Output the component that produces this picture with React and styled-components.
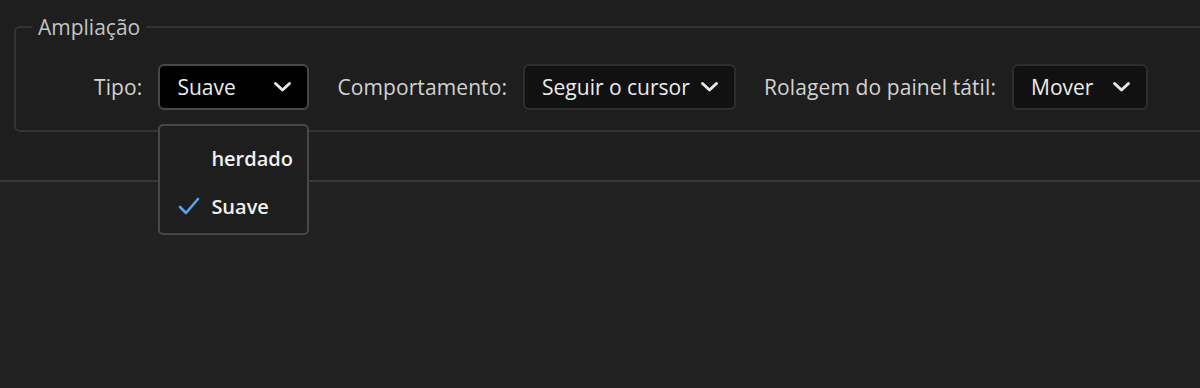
import React from "react";
import styled, { createGlobalStyle } from "styled-components";

const GlobalStyle = createGlobalStyle`
  html, body {
    margin: 0;
    padding: 0;
    background: #222222;
    font-family: "Open Sans", "Noto Sans", sans-serif;
  }
`;

const Chevron = () => (
  <svg width="19" height="12" viewBox="0 0 19 12" fill="none">
    <path
      d="M2.5 2.5 L9.5 9 L16.5 2.5"
      stroke="#e6e6e6"
      strokeWidth="3"
      strokeLinecap="round"
      strokeLinejoin="round"
    />
  </svg>
);

const Check = () => (
  <svg width="22" height="18" viewBox="0 0 22 18" fill="none">
    <path
      d="M2 10 L8 16 L20 2"
      stroke="#5aa2ee"
      strokeWidth="2.6"
      strokeLinecap="round"
      strokeLinejoin="round"
    />
  </svg>
);

const App = () => {
  return (
    <Page>
      <GlobalStyle />
      <TopSection>
        <Group>
          <Legend>Ampliação</Legend>
          <Row>
            <Field>
              <Label>Tipo:</Label>
              <SelectWrap>
                <Select $width={151} $active>
                  <span>Suave</span>
                  <Chevron />
                </Select>
                <Menu>
                  <MenuItem>
                    <CheckSlot />
                    herdado
                  </MenuItem>
                  <MenuItem>
                    <CheckSlot>
                      <Check />
                    </CheckSlot>
                    Suave
                  </MenuItem>
                </Menu>
              </SelectWrap>
            </Field>
            <Field>
              <Label>Comportamento:</Label>
              <Select $width={213}>
                <span>Seguir o cursor</span>
                <Chevron />
              </Select>
            </Field>
            <Field>
              <Label>Rolagem do painel tátil:</Label>
              <Select $width={136}>
                <span>Mover</span>
                <Chevron />
              </Select>
            </Field>
          </Row>
        </Group>
      </TopSection>
      <Rest />
    </Page>
  );
};

export default App;

const Page = styled.div`
  width: 1200px;
  height: 388px;
  overflow: hidden;
  background: #222222;
`;

const TopSection = styled.div`
  height: 182px;
  box-sizing: border-box;
  padding: 14px 0 0 14px;
  background: #1e1e1e;
  border-bottom: 2px solid #383838;
`;

const Group = styled.fieldset`
  margin: 0;
  padding: 0;
  height: 118px;
  box-sizing: border-box;
  border: 2px solid #333333;
  border-right: none;
  border-radius: 6px 0 0 6px;
`;

const Legend = styled.legend`
  margin-left: 16px;
  padding: 0 6px;
  font-size: 21px;
  line-height: 26px;
  color: #c4c4c4;
`;

const Row = styled.div`
  display: flex;
  align-items: center;
  gap: 28px;
  padding: 24px 0 0 78px;
`;

const Field = styled.div`
  display: flex;
  align-items: center;
  gap: 16px;
`;

const Label = styled.span`
  font-size: 21px;
  letter-spacing: 0.1px;
  color: #d2d2d2;
`;

const SelectWrap = styled.div`
  position: relative;
`;

const Select = styled.div`
  display: flex;
  align-items: center;
  justify-content: space-between;
  box-sizing: border-box;
  width: ${(p) => p.$width}px;
  height: 46px;
  padding: 0 15px 0 17px;
  border: 2px solid ${(p) => (p.$active ? "#474747" : "#2e2e2e")};
  border-radius: 6px;
  background: ${(p) => (p.$active ? "#000000" : "#111111")};
  color: #ececec;
  font-size: 21px;
`;

const Menu = styled.div`
  position: absolute;
  top: 60px;
  left: 0;
  width: 151px;
  height: 111px;
  box-sizing: border-box;
  padding: 8px 0 7px;
  background: #1e1e1e;
  border: 2px solid #474747;
  border-radius: 5px;
  z-index: 5;
`;

const MenuItem = styled.div`
  display: flex;
  align-items: center;
  height: 48px;
  padding-left: 18px;
  font-size: 20px;
  font-weight: 600;
  color: #f0f0f0;
`;

const CheckSlot = styled.span`
  display: flex;
  align-items: center;
  width: 33px;
`;

const Rest = styled.div`
  height: 206px;
  background: #222222;
`;
